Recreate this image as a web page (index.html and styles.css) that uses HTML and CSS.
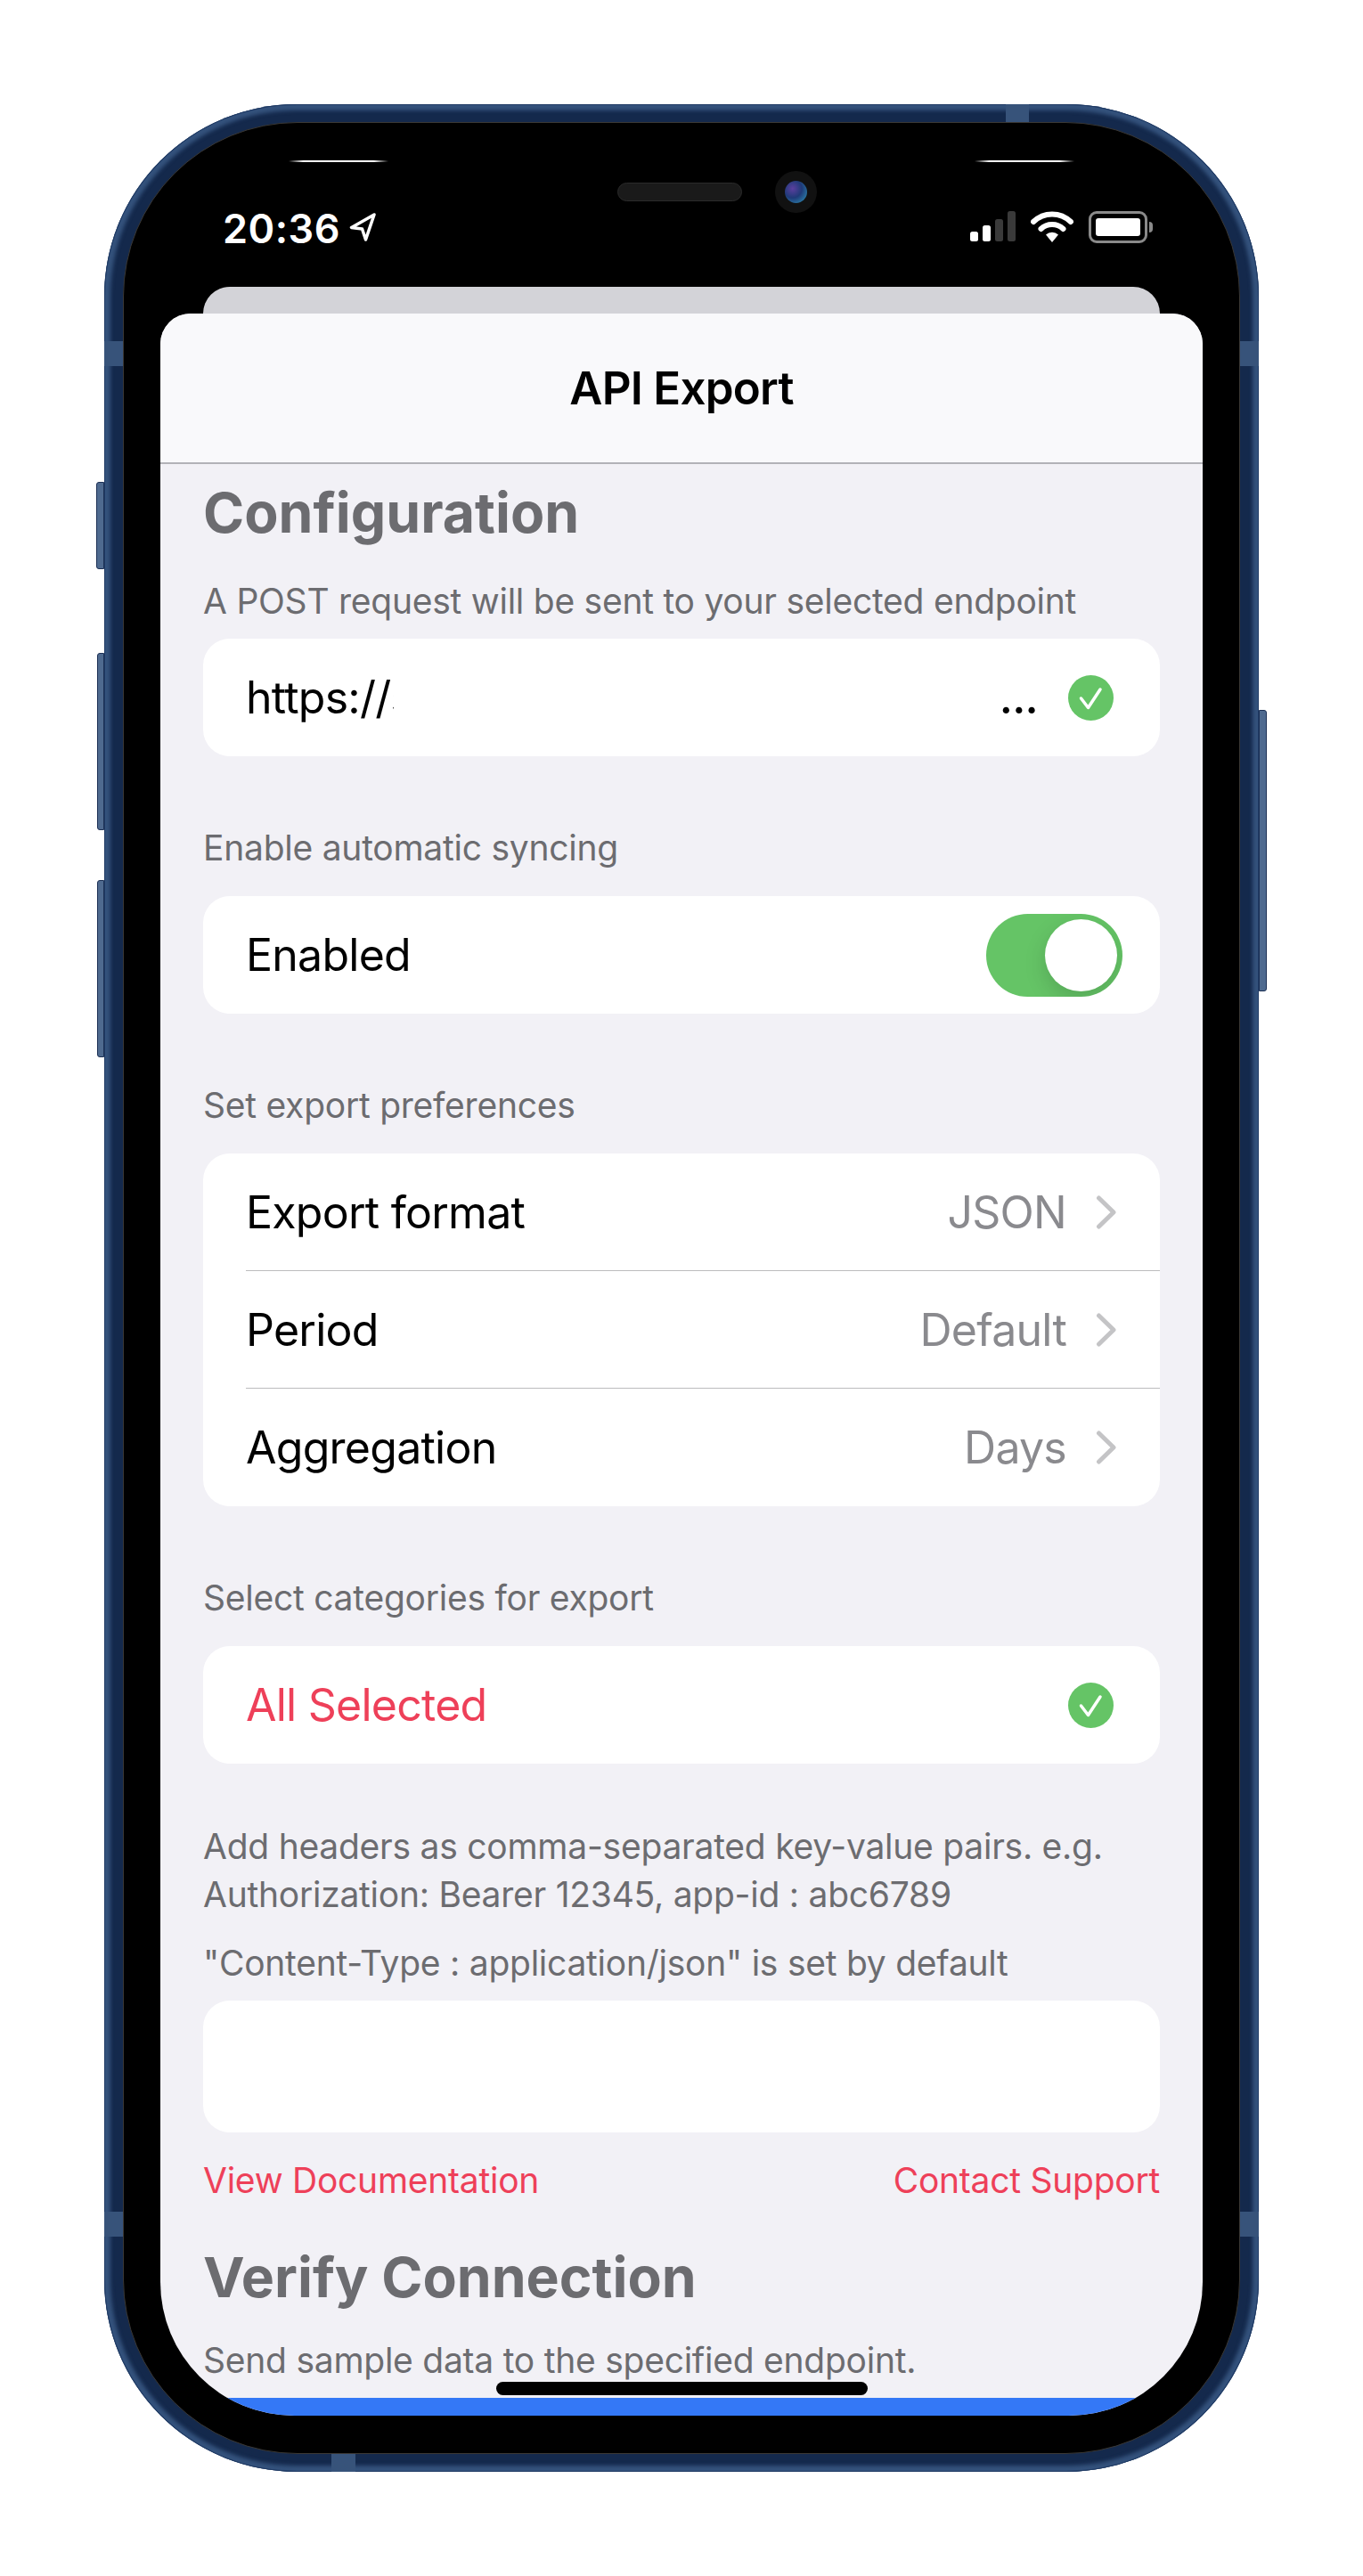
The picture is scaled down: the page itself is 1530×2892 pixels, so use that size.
FILE: index.html
```html
<!DOCTYPE html>
<html lang="en">
<head>
    <meta charset="UTF-8">
    <title>API Export</title>
    <link rel="stylesheet" href="styles.css">
</head>
<body>

<div class="phone">
    <!-- hardware buttons and antenna seams -->
    <span class="btn btn-mute"></span>
    <span class="btn btn-vol-up"></span>
    <span class="btn btn-vol-down"></span>
    <span class="btn btn-power"></span>
    <span class="seam seam-top"></span>
    <span class="seam seam-bottom"></span>
    <span class="seam seam-side seam-l1"></span>
    <span class="seam seam-side seam-r1"></span>
    <span class="seam seam-side seam-l2"></span>
    <span class="seam seam-side seam-r2"></span>

    <div class="bezel">
        <span class="glint glint-left"></span>
        <span class="glint glint-right"></span>
        <span class="speaker"></span>
        <span class="camera"><span class="lens"></span></span>

        <div class="status-bar">
            <div class="status-left">
                <span class="time">20:36</span>
                <svg class="location" width="30" height="32" viewBox="0 0 30 32">
                    <path d="M28 2 L2.500 16.500 L14.500 18 L18.500 30 Z" fill="none" stroke="#fff" stroke-width="3.500" stroke-linejoin="round"/>
                </svg>
            </div>
            <div class="status-right">
                <svg width="51" height="34" viewBox="0 0 51 34">
                    <rect x="0" y="23" width="9" height="11" rx="2.500" fill="#fff"/>
                    <rect x="14" y="16" width="9" height="18" rx="2.500" fill="#fff"/>
                    <rect x="28" y="9" width="9" height="25" rx="2.500" fill="#3a3a3a"/>
                    <rect x="42" y="0" width="9" height="34" rx="2.500" fill="#3a3a3a"/>
                </svg>
                <svg width="48" height="35" viewBox="0 0 48 35">
                    <path d="M3 12 A30 30 0 0 1 45 12" fill="none" stroke="#fff" stroke-width="6" stroke-linecap="round"/>
                    <path d="M11.500 20 A18 18 0 0 1 36.500 20" fill="none" stroke="#fff" stroke-width="6" stroke-linecap="round"/>
                    <path d="M17 26.500 A10 10 0 0 1 31 26.500 L24 35 Z" fill="#fff"/>
                </svg>
                <div class="battery"><span class="battery-fill"></span></div>
                <span class="battery-tip"></span>
            </div>
        </div>

        <div class="back-card"></div>

        <div class="sheet">
            <div class="sheet-header">API Export</div>

            <div class="sheet-body">
                <h2 class="first-title">Configuration</h2>
                <p class="label">A POST request will be sent to your selected endpoint</p>
                <div class="card">
                    <div class="row">
                        <span class="url-text"><span class="url-clip">https://s</span></span>
                        <span class="url-dots">...</span>
                        <svg class="check" width="51" height="51" viewBox="0 0 51 51">
                            <circle cx="25.500" cy="25.500" r="25.500" fill="#65c466"/>
                            <path d="M14.500 26 L22.500 36.500 L36 16" fill="none" stroke="#fff" stroke-width="3.500" stroke-linecap="round" stroke-linejoin="round"/>
                        </svg>
                    </div>
                </div>

                <p class="label label-gap">Enable automatic syncing</p>
                <div class="card">
                    <div class="row">
                        <span>Enabled</span>
                        <span class="toggle"><span class="knob"></span></span>
                    </div>
                </div>

                <p class="label label-gap">Set export preferences</p>
                <div class="card">
                    <div class="row row-line">
                        <span>Export format</span>
                        <span class="value">JSON</span>
                        <svg class="chevron" width="24" height="38" viewBox="0 0 24 38">
                            <path d="M3.500 3 L20 19 L3.500 35" fill="none" stroke="#c4c4c6" stroke-width="5" stroke-linecap="round" stroke-linejoin="round"/>
                        </svg>
                    </div>
                    <div class="row row-line">
                        <span>Period</span>
                        <span class="value">Default</span>
                        <svg class="chevron" width="24" height="38" viewBox="0 0 24 38">
                            <path d="M3.500 3 L20 19 L3.500 35" fill="none" stroke="#c4c4c6" stroke-width="5" stroke-linecap="round" stroke-linejoin="round"/>
                        </svg>
                    </div>
                    <div class="row">
                        <span>Aggregation</span>
                        <span class="value">Days</span>
                        <svg class="chevron" width="24" height="38" viewBox="0 0 24 38">
                            <path d="M3.500 3 L20 19 L3.500 35" fill="none" stroke="#c4c4c6" stroke-width="5" stroke-linecap="round" stroke-linejoin="round"/>
                        </svg>
                    </div>
                </div>

                <p class="label label-gap">Select categories for export</p>
                <div class="card">
                    <div class="row">
                        <span class="pink">All Selected</span>
                        <svg class="check" width="51" height="51" viewBox="0 0 51 51">
                            <circle cx="25.500" cy="25.500" r="25.500" fill="#65c466"/>
                            <path d="M14.500 26 L22.500 36.500 L36 16" fill="none" stroke="#fff" stroke-width="3.500" stroke-linecap="round" stroke-linejoin="round"/>
                        </svg>
                    </div>
                </div>

                <p class="help">Add headers as comma-separated key-value pairs. e.g. Authorization: Bearer 12345, app-id : abc6789</p>
                <p class="help help-second">"Content-Type : application/json" is set by default</p>
                <div class="card text-area"></div>

                <div class="links">
                    <span>View Documentation</span>
                    <span>Contact Support</span>
                </div>

                <h2>Verify Connection</h2>
                <p class="label label-last">Send sample data to the specified endpoint.</p>
            </div>

            <div class="blue-bar"></div>
            <span class="home-bar"></span>
        </div>
    </div>
</div>

</body>
</html>
```

FILE: styles.css
```css
* {
    box-sizing: border-box;
}
body {
    margin: 0;
    padding: 117px 117px 117px;
    background: #fff;
    font-family: Inter, "Liberation Sans", sans-serif;
}
.phone {
    position: relative;
    width: 1296px;
    height: 2658px;
    padding: 20px 21px;
    border-radius: 216px;
    background: #14294c;
    box-shadow: inset 0 0 0 1px #1f3a64, inset 0 0 4px 7px #34527c;
}
.btn {
    position: absolute;
    width: 9px;
    background: #4f6a8f;
    border: 1px solid #1c3055;
    border-radius: 3px 0 0 3px;
}
.btn-mute { left: -9px; top: 424px; height: 98px; }
.btn-vol-up { left: -8px; top: 616px; height: 199px; width: 8px; }
.btn-vol-down { left: -8px; top: 871px; height: 199px; width: 8px; }
.btn-power { right: -9px; top: 680px; height: 316px; border-radius: 0 3px 3px 0; }

.seam {
    position: absolute;
    background: #37537a;
}
.seam-top { left: 1012px; top: 0; width: 26px; height: 20px; }
.seam-bottom { left: 255px; bottom: 0; width: 27px; height: 20px; }
.seam-side { width: 21px; height: 28px; }
.seam-l1 { left: 0; top: 266px; }
.seam-r1 { right: 0; top: 266px; }
.seam-l2 { left: 0; top: 2366px; }
.seam-r2 { right: 0; top: 2366px; }

.bezel {
    position: relative;
    height: 100%;
    display: flex;
    flex-direction: column;
    padding: 0 41px 42px;
    background: #000;
    border: 1px solid #3a3835;
    border-radius: 196px;
}
.glint {
    position: absolute;
    top: 42px;
    width: 112px;
    height: 2px;
    background: linear-gradient(90deg, transparent, #fff 15%, #fff 85%, transparent);
}
.glint-left { left: 185px; }
.glint-right { right: 185px; }
.speaker {
    position: absolute;
    left: 554px;
    top: 67px;
    width: 140px;
    height: 21px;
    background: #1a1a1a;
    border: 1px solid #2b2b2b;
    border-radius: 11px;
}
.camera {
    position: absolute;
    left: 731px;
    top: 54px;
    width: 47px;
    height: 47px;
    display: flex;
    align-items: center;
    justify-content: center;
    background: #111;
    border-radius: 50%;
}
.lens {
    width: 25px;
    height: 25px;
    border-radius: 50%;
    background: radial-gradient(circle at 35% 35%, #5b3f9e, #1f3a78 45%, #2b7fa8 85%);
}

.status-bar {
    display: flex;
    justify-content: space-between;
    height: 184px;
    padding: 99px 56px 0 70px;
    color: #fff;
}
.status-left {
    display: flex;
    align-items: flex-start;
    gap: 10px;
}
.time {
    font-size: 45px;
    font-weight: 600;
    line-height: 40px;
    letter-spacing: 0.5px;
}
.location {
    margin-top: 2px;
}
.status-right {
    display: flex;
    align-items: flex-start;
    gap: 17px;
}
.battery {
    width: 66px;
    height: 36px;
    padding: 5px;
    border: 3px solid #8a8a8a;
    border-radius: 9px;
}
.battery-fill {
    display: block;
    height: 100%;
    background: #fff;
    border-radius: 3px;
}
.battery-tip {
    width: 4px;
    height: 12px;
    margin: 12px 0 0 -15px;
    background: #8a8a8a;
    border-radius: 0 4px 4px 0;
}

.back-card {
    height: 30px;
    margin: 0 48px;
    background: #d3d3d8;
    border-radius: 30px 30px 0 0;
}
.sheet {
    position: relative;
    flex: 1;
    display: flex;
    flex-direction: column;
    min-height: 0;
    overflow: hidden;
    background: #f2f1f6;
    border-radius: 34px 34px 150px 150px;
}
.sheet-header {
    height: 169px;
    flex-shrink: 0;
    display: flex;
    align-items: center;
    justify-content: center;
    background: #f9f9fb;
    border-bottom: 2px solid #b2b2b7;
    font-size: 51px;
    font-weight: 600;
    letter-spacing: -0.75px;
    color: #000;
}
.sheet-body {
    flex: 1;
    min-height: 0;
    overflow: hidden;
    padding: 0 48px;
}
h2 {
    margin: 48px 0 0;
    font-size: 62.500px;
    line-height: 72px;
    font-weight: 700;
    color: #6c6c70;
}
h2.first-title {
    margin-top: 18px;
}
.label {
    margin: 40px 0 18px;
    font-size: 39px;
    line-height: 48px;
    letter-spacing: -0.25px;
    color: #6c6c70;
}
.label-gap {
    margin-top: 79px;
    margin-bottom: 30px;
}
.label-last {
    margin-top: 34px;
}
.card {
    background: #fff;
    border-radius: 30px;
}
.row {
    position: relative;
    display: flex;
    align-items: center;
    height: 132px;
    padding: 0 48px;
    font-size: 50px;
    letter-spacing: -0.75px;
    color: #000;
}
.row-line::after {
    content: "";
    position: absolute;
    left: 48px;
    right: 0;
    bottom: 0;
    height: 1px;
    background: #bcbcbe;
}
.value {
    margin-left: auto;
    color: #8a8a8e;
}
.chevron {
    margin-left: 33px;
    margin-right: 0;
}
.url-text {
    flex: 1;
}
.url-clip {
    display: block;
    width: 166px;
    overflow: hidden;
    white-space: nowrap;
}
.url-dots {
    margin-right: 34px;
    font-weight: 500;
}
.check {
    margin-left: auto;
    margin-right: 4px;
}
.url-dots + .check {
    margin-left: 0;
}
.toggle {
    display: flex;
    justify-content: flex-end;
    align-items: center;
    width: 153px;
    height: 93px;
    margin-left: auto;
    margin-right: -6px;
    padding-right: 6px;
    overflow: hidden;
    background: #65c466;
    border-radius: 47px;
}
.knob {
    width: 81px;
    height: 81px;
    background: #fff;
    border-radius: 50%;
    box-shadow: 0 9px 24px rgba(0, 0, 0, 0.15);
}
.pink {
    color: #ee4059;
}
.help {
    margin: 66px 0 0;
    font-size: 39px;
    line-height: 54px;
    letter-spacing: -0.25px;
    color: #6c6c70;
}
.help-second {
    margin: 23px 0 15px;
}
.text-area {
    height: 148px;
}
.links {
    display: flex;
    justify-content: space-between;
    margin-top: 30px;
    font-size: 39px;
    line-height: 48px;
    letter-spacing: -0.25px;
    color: #ee4059;
}
.blue-bar {
    height: 20px;
    flex-shrink: 0;
    background: #3478f6;
}
.home-bar {
    position: absolute;
    left: 377px;
    bottom: 23px;
    width: 417px;
    height: 15px;
    background: #000;
    border-radius: 8px;
}
```
